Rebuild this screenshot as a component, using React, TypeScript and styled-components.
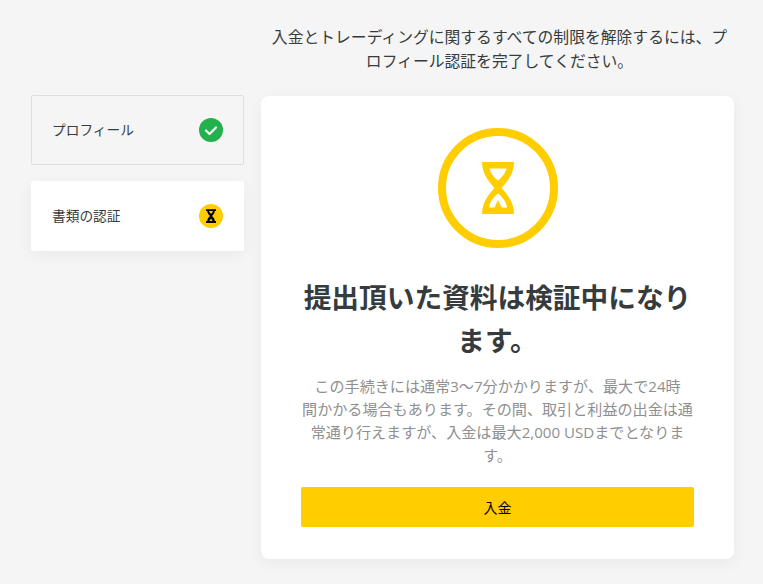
import styled, { createGlobalStyle } from "styled-components";

const GlobalStyle = createGlobalStyle`
  html, body {
    margin: 0;
    padding: 0;
    background: #f5f5f5;
  }
  * {
    box-sizing: border-box;
  }
`;

const Page = styled.div`
  width: 763px;
  height: 584px;
  overflow: hidden;
  padding: 24px 29px 0 31px;
  font-family: "Open Sans", "Noto Sans CJK JP", sans-serif;
  background: #f5f5f5;
`;

const Notice = styled.p`
  margin: 0 0 24px 230px;
  padding: 1px 3px 0 7px;
  height: 47px;
  font-size: 15.8px;
  line-height: 24px;
  text-align: center;
  color: #363c3e;
`;

const Columns = styled.div`
  display: flex;
  align-items: flex-start;
  gap: 17px;
`;

const Sidebar = styled.nav`
  width: 213px;
  display: flex;
  flex-direction: column;
  gap: 16px;
`;

const Step = styled.div<{ $active?: boolean }>`
  height: 70px;
  display: flex;
  align-items: center;
  justify-content: space-between;
  padding: 0 ${(p) => (p.$active ? "21px" : "20px")};
  font-size: 13.7px;
  color: #363c3e;
  border-radius: 2px;
  background: ${(p) => (p.$active ? "#fff" : "#f5f5f5")};
  border: ${(p) => (p.$active ? "none" : "1px solid #dedede")};
  box-shadow: ${(p) => (p.$active ? "0 4px 16px rgba(0, 0, 0, 0.05)" : "none")};
`;

const StepLabel = styled.span`
  margin-bottom: 2px;
`;

const Badge = styled.span<{ $color: string }>`
  width: 24px;
  height: 24px;
  border-radius: 50%;
  display: flex;
  align-items: center;
  justify-content: center;
  background: ${(p) => p.$color};
`;

const Card = styled.section`
  width: 473px;
  margin-top: 1px;
  padding: 32px 40px;
  display: flex;
  flex-direction: column;
  align-items: center;
  background: #fff;
  border-radius: 8px;
  box-shadow: 0 4px 16px rgba(0, 0, 0, 0.05);
`;

const Ring = styled.div`
  width: 120px;
  height: 120px;
  border: 8px solid #ffcd00;
  border-radius: 50%;
  display: flex;
  align-items: center;
  justify-content: center;
`;

const Title = styled.h1`
  margin: 28px 0 13px;
  font-size: 27.7px;
  line-height: 43px;
  font-weight: 700;
  text-align: center;
  color: #363c3e;
`;

const Body = styled.p`
  margin: 0 0 20px;
  font-size: 15.1px;
  line-height: 23px;
  text-align: center;
  white-space: nowrap;
  color: #8f8f8f;
`;

const DepositButton = styled.button`
  width: 100%;
  height: 40px;
  border: none;
  border-radius: 2px;
  background: #ffcd00;
  color: #000;
  font-family: inherit;
  font-size: 14px;
  cursor: pointer;
`;

const Hourglass = () => (
  <svg width="32" height="52" viewBox="0 0 32 52" fill="#ffcd00">
    <path
      fillRule="evenodd"
      d="M0 0H32C32 11 26 19 19.500 26C26 33 32 41 32 52H0C0 41 6 33 12.500 26C6 19 0 11 0 0ZM7.500 6.500C8.500 11 12 15.500 16 18.500C20 15.500 23.500 11 24.500 6.500ZM7 45.500H12.500L16 38L19.500 45.500H25C24 39.500 20.500 35 16 31.500C11.500 35 8 39.500 7 45.500Z"
    />
  </svg>
);

const SmallHourglass = () => (
  <svg width="10" height="14" viewBox="0 0 32 44">
    <path
      fill="#000"
      fillRule="evenodd"
      d="M0 0H32V6H28C28 12 24 18 19 22C24 26 28 32 28 38H32V44H0V38H4C4 32 8 26 13 22C8 18 4 12 4 6H0ZM10 6C11 10 13 13 16 15C19 13 21 10 22 6ZM11 38H21C20 35 18 33 16 31C14 33 12 35 11 38Z"
    />
  </svg>
);

const Check = () => (
  <svg width="14" height="11" viewBox="0 0 14 11" fill="none">
    <path d="M2 5.500L5.500 9L12 2.500" stroke="#fff" strokeWidth="2.200" strokeLinecap="round" strokeLinejoin="round" />
  </svg>
);

export default function App() {
  return (
    <Page>
      <GlobalStyle />
      <Notice>入金とトレーディングに関するすべての制限を解除するには、プロフィール認証を完了してください。</Notice>
      <Columns>
        <Sidebar>
          <Step>
            <StepLabel>プロフィール</StepLabel>
            <Badge $color="#22b14c">
              <Check />
            </Badge>
          </Step>
          <Step $active>
            <StepLabel>書類の認証</StepLabel>
            <Badge $color="#ffcd00">
              <SmallHourglass />
            </Badge>
          </Step>
        </Sidebar>
        <Card>
          <Ring>
            <Hourglass />
          </Ring>
          <Title>提出頂いた資料は検証中になります。</Title>
          <Body>
            この手続きには通常3〜7分かかりますが、最大で24時
            <br />
            間かかる場合もあります。その間、取引と利益の出金は通
            <br />
            常通り行えますが、入金は最大2,000 USDまでとなりま
            <br />
            す。
          </Body>
          <DepositButton>入金</DepositButton>
        </Card>
      </Columns>
    </Page>
  );
}
